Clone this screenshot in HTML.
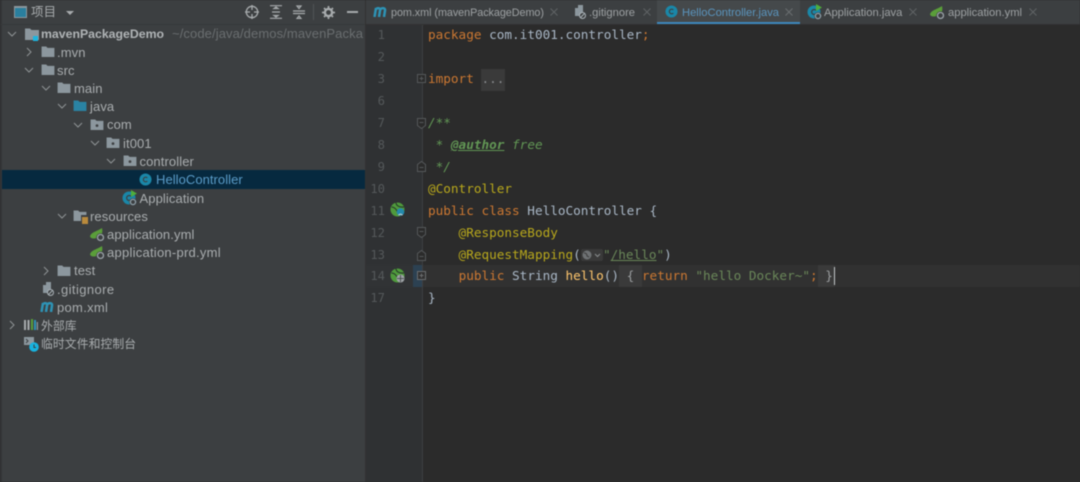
<!DOCTYPE html>
<html><head><meta charset="utf-8"><style>
*{margin:0;padding:0;box-sizing:border-box}
html,body{width:1080px;height:482px;overflow:hidden;background:#2b2b2b}
#r{position:relative;width:1080px;height:482px;overflow:hidden;filter:blur(.4px);font-family:"Liberation Sans","Noto Sans CJK SC",sans-serif}
#r div,#r span.a,#r svg{position:absolute}
.t{font-size:13px;color:#a9adaf;white-space:nowrap;line-height:18px;letter-spacing:.1px}
.tab{font-size:11.2px;color:#9da1a3;white-space:nowrap;line-height:16px;top:5px}
.c{font-family:"DejaVu Sans Mono",monospace;font-size:12.7px;line-height:22px;white-space:pre;color:#a9b7c6;left:428px}
.n{font-family:"DejaVu Sans Mono",monospace;font-size:12.2px;line-height:22px;color:#54585a;width:20px;text-align:right;left:365px}
.k{color:#cc7832}.an{color:#b8a81c}.g{color:#629755}.s{color:#6a8759}.f{color:#ffc66d}
</style></head><body><div id="r">
<svg width="0" height="0"><defs>
<symbol id="fo" viewBox="0 0 14 12"><path d="M0 .5h5l1.500 1.500H14V12H0z" fill="#8c979e"/></symbol>
<symbol id="pk" viewBox="0 0 14 12"><path d="M0 .5h5l1.500 1.500H14V12H0z" fill="#8c979e"/><circle cx="7" cy="7.200" r="1.500" fill="#3c3f41"/></symbol>
<symbol id="fb" viewBox="0 0 14 12"><path d="M0 .5h5l1.500 1.500H14V12H0z" fill="#2a83a3"/></symbol>
<symbol id="dn" viewBox="0 0 10 10"><path d="M1 3l4 4 4-4" fill="none" stroke="#8f9396" stroke-width="1"/></symbol>
<symbol id="rt" viewBox="0 0 10 10"><path d="M3 1l4 4-4 4" fill="none" stroke="#8f9396" stroke-width="1"/></symbol>
<symbol id="cl" viewBox="0 0 14 14"><circle cx="7" cy="7" r="6.500" fill="#1a87a8"/><path d="M9 5.300A2.500 2.500 0 1 0 9 8.700" fill="none" stroke="#3c3f41" stroke-width="1.200"/></symbol>
<symbol id="ap" viewBox="0 0 16 16"><circle cx="7" cy="8" r="6.500" fill="#1a87a8"/><path d="M9 6.300A2.500 2.500 0 1 0 9 9.700" fill="none" stroke="#3c3f41" stroke-width="1.200"/><path d="M9 0l6 3.500-6 3.500z" fill="#4fae3c"/><circle cx="11" cy="12" r="3.800" fill="#3c3f41"/><circle cx="11" cy="12" r="2.600" fill="none" stroke="#8fa0aa" stroke-width="1.300"/></symbol>
<symbol id="sp" viewBox="0 0 16 14"><path d="M0 8.500C1 4 7 3.500 12 0c1 4 0 8-4 9.500C4 11 1 11 0 8.500z" fill="#5a9e3a"/><circle cx="10.500" cy="9.500" r="4.300" fill="#3c3f41"/><circle cx="10.500" cy="9.500" r="3" fill="none" stroke="#9aa2a7" stroke-width="1.300"/></symbol>
<symbol id="mv" viewBox="0 0 14 10"><path d="M1.500 10L3 1M2.500 3C4 .5 7.500 .5 7 3.500L6 10M7 3C8.500 .5 12.500 .5 12 3.500L11 10" fill="none" stroke="#2e93b5" stroke-width="2.500"/></symbol>
<symbol id="gi" viewBox="0 0 12 14"><path d="M1 3h3V0h5v11H1z" fill="#8c979e"/><circle cx="8.500" cy="10.500" r="3" fill="#3c3f41" stroke="#aab2b7"/><path d="M6.500 12.500l4-4" stroke="#aab2b7"/></symbol>
<symbol id="gb" viewBox="0 0 15 15"><circle cx="7.500" cy="7.500" r="7" fill="#4f9a3c"/><path d="M1.500 5c3 0 5 2 6.500 6M6 .5c0 3 3 5 8 4.500" stroke="#26382a" stroke-width="1.100" fill="none"/></symbol>
</defs></svg>

<!-- sidebar -->
<div style="left:0;top:0;width:365px;height:482px;background:#3c3f41"></div>
<div style="left:0;top:0;width:2px;height:482px;background:#333537"></div>
<div style="left:0;top:24px;width:365px;height:1px;background:#36393b"></div>
<div style="left:14px;top:6px;width:13px;height:12px;border:1.500px solid #8c979e;border-top-width:2.500px;background:#2a7f9e"></div>
<div class="t" style="left:31px;top:3px;color:#a9adaf;font-size:12.500px">项目</div>
<svg style="left:66px;top:10px" width="9" height="6"><path d="M0 1h8L4 5z" fill="#a7abad"/></svg>
<svg style="left:245px;top:5px" width="14" height="14" fill="none" stroke="#a7abad" stroke-width="1.300"><circle cx="7" cy="7" r="5.700"/><path d="M7 0v5M7 9v5M0 7h5M9 7h5"/></svg>
<svg style="left:269px;top:5px" width="14" height="14" fill="none" stroke="#a7abad" stroke-width="1.200"><path d="M1 .7h12M1 13.300h12M3 7h8M5 3.500h4L7 2zM5 10.500h4L7 12z"/></svg>
<svg style="left:292px;top:5px" width="14" height="14" fill="none" stroke="#a7abad" stroke-width="1.200"><path d="M1 6h12M1 8.500h12M5 1h4L7 3.500zM5 13.500h4L7 11z"/></svg>
<div style="left:313px;top:4px;width:1px;height:16px;background:#515456"></div>
<svg style="left:322px;top:6px" width="13" height="13"><circle cx="6.500" cy="6.500" r="3.600" fill="none" stroke="#a7abad" stroke-width="2.400"/><path d="M6.500 0v13M0 6.500h13M2 2l9 9M11 2l-9 9" stroke="#a7abad" stroke-width="1.700" stroke-dasharray="2 9 2 0"/></svg>
<div style="left:347px;top:11px;width:11px;height:1.500px;background:#a7abad"></div>

<!-- tree -->
<svg style="left:7px;top:29px" width="10" height="10"><use href="#dn"/></svg>
<svg style="left:25px;top:28px" width="14" height="12"><use href="#fo"/></svg>
<div style="left:33px;top:36px;width:5px;height:5px;background:#1cb5e0"></div>
<div class="t" style="left:41px;top:25px;font-weight:700;font-size:12.3px;letter-spacing:0;color:#b0b4b6">mavenPackageDemo</div>
<div class="t" style="left:172px;top:25px;color:#6a6e70">~/code/java/demos/mavenPacka</div>

<svg style="left:24px;top:47px" width="10" height="10"><use href="#rt"/></svg>
<svg style="left:41px;top:46px" width="14" height="11"><use href="#fo"/></svg>
<div class="t" style="left:57px;top:43.500px">.mvn</div>

<svg style="left:24px;top:65px" width="10" height="10"><use href="#dn"/></svg>
<svg style="left:41px;top:64px" width="14" height="11"><use href="#fo"/></svg>
<div class="t" style="left:57px;top:61.500px">src</div>

<svg style="left:41px;top:83px" width="10" height="10"><use href="#dn"/></svg>
<svg style="left:57px;top:82px" width="14" height="11"><use href="#fo"/></svg>
<div class="t" style="left:74px;top:80px">main</div>

<svg style="left:57px;top:101px" width="10" height="10"><use href="#dn"/></svg>
<svg style="left:73px;top:100px" width="14" height="11"><use href="#fb"/></svg>
<div class="t" style="left:90px;top:98px">java</div>

<svg style="left:73px;top:120px" width="10" height="10"><use href="#dn"/></svg>
<svg style="left:90px;top:119px" width="14" height="11"><use href="#pk"/></svg>
<div class="t" style="left:107px;top:116px">com</div>

<svg style="left:90px;top:138px" width="10" height="10"><use href="#dn"/></svg>
<svg style="left:106px;top:137px" width="14" height="11"><use href="#pk"/></svg>
<div class="t" style="left:123px;top:134.500px">it001</div>

<svg style="left:106px;top:156px" width="10" height="10"><use href="#dn"/></svg>
<svg style="left:123px;top:155px" width="14" height="11"><use href="#pk"/></svg>
<div class="t" style="left:139.500px;top:152.500px">controller</div>

<div style="left:2px;top:170px;width:363px;height:19px;background:#06293f"></div>
<svg style="left:139px;top:173px" width="13" height="13"><use href="#cl"/></svg>
<div class="t" style="left:156px;top:171px;color:#5a9bc7;letter-spacing:.05px">HelloController</div>

<svg style="left:122px;top:190px" width="16" height="16"><use href="#ap"/></svg>
<div class="t" style="left:139.500px;top:189.500px">Application</div>

<svg style="left:57px;top:211px" width="10" height="10"><use href="#dn"/></svg>
<svg style="left:73px;top:210px" width="14" height="11"><use href="#fo"/></svg>
<div style="left:82px;top:216px;width:6px;height:8px;background:#b98a3c;border-top:1px solid #3c3f41;outline:1px solid #3c3f41"></div>
<div class="t" style="left:90px;top:207.500px">resources</div>

<svg style="left:90px;top:228px" width="16" height="14"><use href="#sp"/></svg>
<div class="t" style="left:107px;top:225.500px">application.yml</div>
<svg style="left:90px;top:246px" width="16" height="14"><use href="#sp"/></svg>
<div class="t" style="left:107px;top:244px;letter-spacing:.25px">application-prd.yml</div>

<svg style="left:41px;top:266px" width="10" height="10"><use href="#rt"/></svg>
<svg style="left:57px;top:265px" width="14" height="11"><use href="#fo"/></svg>
<div class="t" style="left:74px;top:262px">test</div>

<svg style="left:42px;top:282px" width="12" height="14"><use href="#gi"/></svg>
<div class="t" style="left:57px;top:280.500px;letter-spacing:.4px">.gitignore</div>
<svg style="left:40px;top:302px" width="14" height="10"><use href="#mv"/></svg>
<div class="t" style="left:57px;top:298.500px;letter-spacing:.3px">pom.xml</div>

<svg style="left:7px;top:320px" width="10" height="10"><use href="#rt"/></svg>
<svg style="left:24px;top:319px" width="14" height="12"><path d="M1 1v10" stroke="#a7abad" stroke-width="2"/><path d="M4.500 1v10" stroke="#a7abad" stroke-width="2"/><path d="M8 0v11" stroke="#5a9e3a" stroke-width="2"/><path d="M11 1v10" stroke="#2e93b5" stroke-width="2"/><path d="M13.500 3v8" stroke="#8c979e" stroke-width="1.500"/></svg>
<div class="t" style="left:41px;top:316.500px;font-size:11.800px">外部库</div>
<svg style="left:24px;top:337px" width="15" height="15"><path d="M0 0h10v8H0z" fill="#8c979e"/><path d="M2 2l2 2-2 2" stroke="#3c3f41" fill="none"/><circle cx="10" cy="10" r="4.800" fill="#18b2de"/><path d="M10 7.500V10.500h2" stroke="#3c3f41" fill="none"/></svg>
<div class="t" style="left:41px;top:335px;font-size:11.800px">临时文件和控制台</div>

<!-- tabs -->
<div style="left:365px;top:0;width:715px;height:24px;background:#3c3f41"></div>
<div style="left:365px;top:0;width:1px;height:482px;background:#323232"></div>
<div style="left:657px;top:0;width:143px;height:24px;background:#45494b"></div>
<div style="left:657px;top:22px;width:143px;height:2.500px;background:#3d87bd"></div>
<div style="left:365px;top:24px;width:715px;height:1px;background:#323232"></div>

<svg style="left:373px;top:7px" width="14" height="10"><use href="#mv"/></svg>
<div class="tab" style="left:391px;font-size:10.800px;letter-spacing:-.05px">pom.xml (mavenPackageDemo)</div>
<svg style="left:550px;top:8px" width="8" height="8" stroke="#5f6365"><path d="M.5.5l7 7M7.500.5l-7 7"/></svg>
<svg style="left:574px;top:5px" width="12" height="14"><use href="#gi"/></svg>
<div class="tab" style="left:589px">.gitignore</div>
<svg style="left:643px;top:8px" width="8" height="8" stroke="#5f6365"><path d="M.5.5l7 7M7.500.5l-7 7"/></svg>
<svg style="left:665px;top:5px" width="13" height="13"><use href="#cl"/></svg>
<div class="tab" style="left:682px;color:#5a94bd">HelloController.java</div>
<svg style="left:785px;top:8px" width="8" height="8" stroke="#6a6e70"><path d="M.5.5l7 7M7.500.5l-7 7"/></svg>
<svg style="left:807px;top:4px" width="16" height="16"><use href="#ap"/></svg>
<div class="tab" style="left:824px">Application.java</div>
<svg style="left:909px;top:8px" width="8" height="8" stroke="#5f6365"><path d="M.5.5l7 7M7.500.5l-7 7"/></svg>
<svg style="left:930px;top:6px" width="16" height="14"><use href="#sp"/></svg>
<div class="tab" style="left:948px">application.yml</div>
<svg style="left:1029px;top:8px" width="8" height="8" stroke="#5f6365"><path d="M.5.5l7 7M7.500.5l-7 7"/></svg>

<!-- gutter -->
<div style="left:366px;top:25px;width:56px;height:457px;background:#2f3133"></div>
<div style="left:422px;top:25px;width:1px;height:457px;background:#3e4042"></div>
<div style="left:423px;top:265px;width:657px;height:22px;background:#313131"></div>
<div style="left:366px;top:265px;width:56px;height:22px;background:#313335"></div>
<div style="left:413px;top:265px;width:9px;height:22px;background:#2c4152"></div>

<div class="n" style="top:24px">1</div><div class="n" style="top:46px">2</div><div class="n" style="top:68px">3</div><div class="n" style="top:90px">6</div><div class="n" style="top:112px">7</div><div class="n" style="top:134px">8</div><div class="n" style="top:156px">9</div><div class="n" style="top:178px">10</div><div class="n" style="top:199.500px">11</div><div class="n" style="top:221.500px">12</div><div class="n" style="top:243.500px">13</div><div class="n" style="top:265px">14</div><div class="n" style="top:287px">17</div>

<!-- fold markers -->
<svg style="left:417px;top:74px" width="10" height="10" fill="#2b2b2b" stroke="#55585a"><path d="M.5.5h8v8h-8zM2.500 4.500h4M4.500 2.500v4"/></svg>
<svg style="left:417px;top:118px" width="10" height="12" fill="#2b2b2b" stroke="#55585a"><path d="M.5.5h8v7l-4 3-4-3zM2.500 4.500h4"/></svg>
<svg style="left:417px;top:160px" width="10" height="12" fill="#2b2b2b" stroke="#55585a"><path d="M.5 11.500h8v-7l-4-3-4 3zM2.500 7.500h4"/></svg>
<svg style="left:417px;top:227px" width="10" height="12" fill="#2b2b2b" stroke="#55585a"><path d="M.5.5h8v7l-4 3-4-3zM2.500 4.500h4"/></svg>
<svg style="left:417px;top:249px" width="10" height="12" fill="#2b2b2b" stroke="#55585a"><path d="M.5 11.500h8v-7l-4-3-4 3zM2.500 7.500h4"/></svg>
<svg style="left:417px;top:271px" width="10" height="10" fill="#313131" stroke="#6a6d6f"><path d="M.5.5h8v8h-8zM2.500 4.500h4M4.500 2.500v4"/></svg>

<!-- gutter icons -->
<svg style="left:390px;top:202px" width="15" height="15"><use href="#gb"/><circle cx="10.500" cy="10" r="3.800" fill="#2389ad"/><path d="M8.500 13l2-1 2 1" stroke="#cfd3d5" fill="none"/></svg>
<svg style="left:390px;top:268px" width="15" height="15"><use href="#gb"/><circle cx="10.500" cy="10.500" r="4" fill="#9ea3a6"/><path d="M7 10.500h7M10.500 7v7" stroke="#3c3f41" stroke-width=".8"/></svg>

<!-- code -->
<div style="left:481px;top:69px;width:24px;height:22px;background:#3a3a3a"></div>
<div style="left:619px;top:265px;width:23px;height:22px;background:#3a3a3a"></div>
<div style="left:818px;top:265px;width:17px;height:22px;background:#3a3a3a"></div>
<div class="c" style="top:24px"><span class="k">package</span> com.it001.controller<span class="k">;</span></div>
<div class="c" style="top:68px"><span class="k">import</span> <span style="color:#8a8d8f">...</span></div>
<div class="c" style="top:112px;color:#629755;font-style:italic">/**</div>
<div class="c" style="top:134px;color:#629755;font-style:italic"> * <b style="text-decoration:underline">@author</b> free</div>
<div class="c" style="top:156px;color:#629755;font-style:italic"> */</div>
<div class="c an" style="top:178px">@Controller</div>
<div class="c" style="top:199.500px"><span class="k">public class</span> HelloController {</div>
<div class="c an" style="top:221.500px">    @ResponseBody</div>
<div class="c" style="top:243.500px"><span class="an">    @RequestMapping</span>(</div>
<svg style="left:581px;top:249px" width="22" height="12"><rect width="22" height="12" rx="2" fill="#3a3a3a"/><circle cx="6" cy="6" r="4.500" fill="#6e7173"/><path d="M3 4c2 0 3 1 3 3l2 1" fill="none" stroke="#3a3a3a"/><path d="M14 5l2.500 2.500L19 5" fill="none" stroke="#8a8d8f"/></svg>
<div class="c" style="top:243.500px;left:603px"><span class="s">"<span style="text-decoration:underline">/hello</span>"</span>)</div>
<div class="c" style="top:265px">    <span class="k">public</span> String <span class="f">hello</span>() <span style="color:#9a9d9f">{</span> <span class="k">return</span> <span class="s">"hello Docker~"</span><span class="k">;</span> <span style="color:#9a9d9f">}</span></div>
<div style="left:834px;top:267px;width:1px;height:18px;background:#c4c8ca"></div>
<div class="c" style="top:287px">}</div>
</div></body></html>
